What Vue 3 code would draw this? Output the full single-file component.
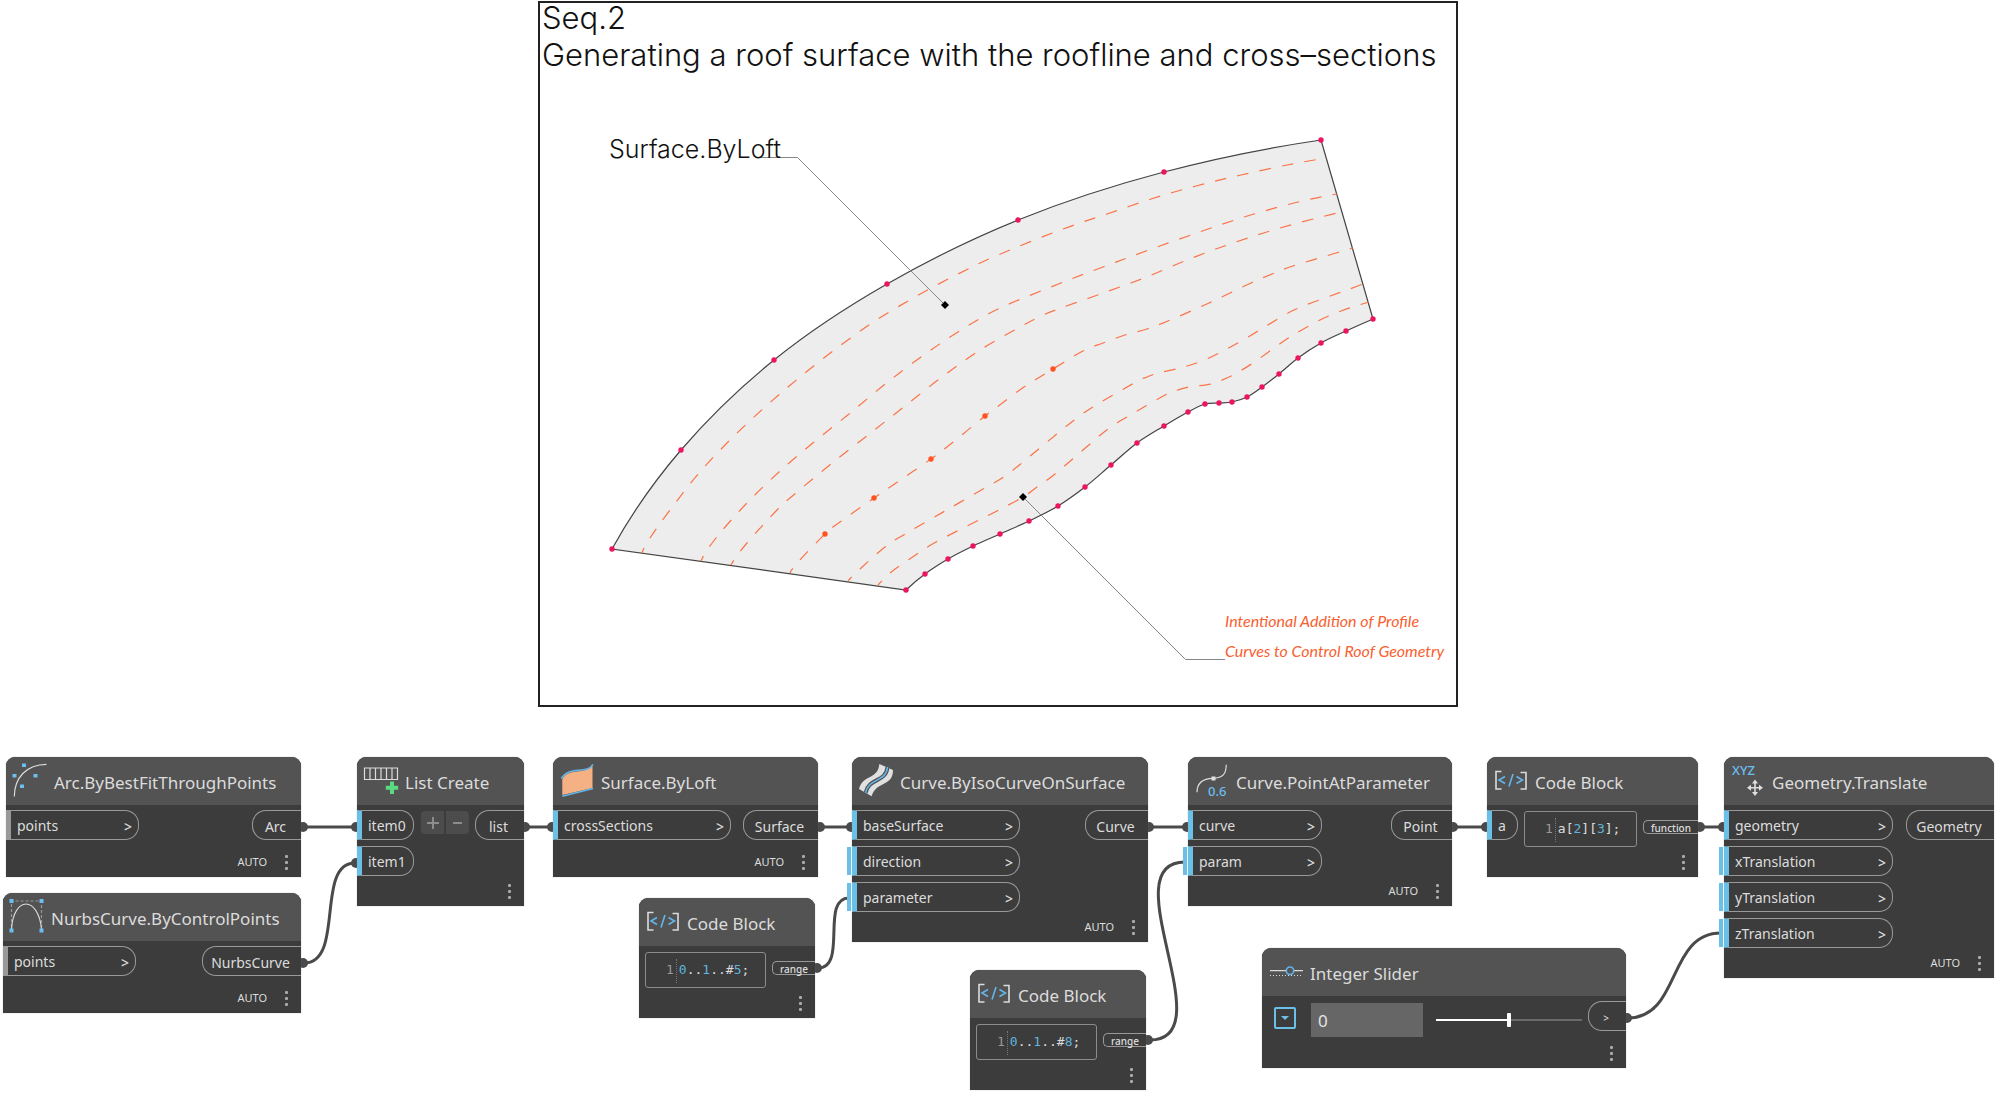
<script setup>
/**
 * RoofGraph
 * - Drawing sheet: lofted roof surface with its profile curves
 * - Node graph: the nodes that build the surface, placed on a free canvas
 */
import { ref } from 'vue'

// --- Drawing sheet ---
const roofline = [
  [612, 549], [681, 450], [774, 360], [887, 284], [1018, 220], [1164, 172], [1321, 140]
]
const eave = [
  [906, 590], [925, 574], [948, 559], [973, 546], [1000, 534], [1029, 521], [1058, 506],
  [1085, 487], [1111, 465], [1137, 443], [1164, 426], [1188, 412], [1205, 404], [1219, 403],
  [1232, 402], [1247, 397], [1262, 387], [1279, 374], [1298, 358], [1321, 343], [1346, 331], [1373, 319]
]
const profiles = [
  [[642, 553], [650, 538], [670, 510], [699, 473], [731, 439], [765, 407], [800, 377], [837, 348], [875, 321], [915, 297], [956, 275], [998, 255], [1063, 229], [1107, 214], [1151, 199], [1196, 186], [1241, 175], [1287, 165], [1327, 158]],
  [[701, 561], [716, 538], [746, 504], [779, 472], [814, 442], [849, 414], [884, 385], [921, 357], [958, 332], [998, 309], [1061, 283], [1103, 267], [1146, 251], [1211, 228], [1254, 214], [1298, 202], [1337, 194]],
  [[731, 565], [747, 543], [778, 509], [796, 493], [831, 464], [868, 435], [905, 406], [942, 377], [980, 350], [1020, 327], [1041, 316], [1061, 308], [1106, 292], [1149, 276], [1192, 258], [1236, 242], [1280, 228], [1325, 216], [1342, 212]],
  [[790, 573], [799, 561], [825, 534], [840, 522], [874, 498], [896, 483], [931, 459], [952, 443], [985, 416], [997, 407], [1024, 387], [1053, 369], [1083, 351], [1103, 343], [1125, 335], [1147, 329], [1168, 321], [1209, 303], [1251, 283], [1272, 274], [1293, 266], [1336, 253], [1353, 248]],
  [[848, 581], [860, 569], [885, 547], [905, 534], [945, 511], [985, 488], [1005, 476], [1023, 462], [1058, 433], [1077, 418], [1096, 405], [1136, 382], [1147, 377], [1158, 373], [1180, 368], [1202, 361], [1223, 351], [1243, 340], [1263, 328], [1294, 310], [1325, 298], [1347, 290], [1363, 284]],
  [[878, 585], [889, 574], [898, 567], [917, 554], [936, 542], [977, 521], [997, 511], [1023, 497], [1037, 487], [1055, 474], [1090, 444], [1108, 429], [1127, 417], [1167, 394], [1178, 390], [1189, 387], [1211, 384], [1222, 380], [1233, 375], [1253, 363], [1281, 343], [1300, 331], [1320, 320], [1341, 311], [1369, 302]]
]
const controlPoints = [[825, 534], [874, 498], [931, 459], [985, 416], [1053, 369]]

// neighbour beyond the end of a run, so that the end segments keep their bend
function beyond(a, b, c) {
  return [3 * a[0] - 3 * b[0] + c[0], 3 * a[1] - 3 * b[1] + c[1]]
}

// smooth segments through the points (Catmull-Rom as cubic beziers)
function segments(pts) {
  let d = ''
  for (let i = 0; i < pts.length - 1; i++) {
    const p1 = pts[i]
    const p2 = pts[i + 1]
    const p0 = pts[i - 1] || beyond(p1, p2, pts[i + 2])
    const p3 = pts[i + 2] || beyond(p2, p1, pts[i - 1])
    const c1 = [p1[0] + (p2[0] - p0[0]) / 6, p1[1] + (p2[1] - p0[1]) / 6]
    const c2 = [p2[0] - (p3[0] - p1[0]) / 6, p2[1] - (p3[1] - p1[1]) / 6]
    d += ` C${c1[0].toFixed(1)} ${c1[1].toFixed(1)} ${c2[0].toFixed(1)} ${c2[1].toFixed(1)} ${p2[0]} ${p2[1]}`
  }
  return d
}
function curve(pts) {
  return `M${pts[0].join(' ')}` + segments(pts)
}
const eaveBack = [...eave].reverse()
const surface = curve(roofline) + ` L${eaveBack[0].join(' ')}` + segments(eaveBack) + ' Z'

// --- Node graph ---
const nodes = [
  { id: 'arc', title: 'Arc.ByBestFitThroughPoints', x: 6, y: 17, w: 295, inW: 133, auto: true,
    inputs: [{ name: 'points', idle: true, arrow: true }], output: 'Arc', outW: 49 },
  { id: 'nurbs', title: 'NurbsCurve.ByControlPoints', x: 3, y: 153, w: 298, inW: 133, auto: true,
    inputs: [{ name: 'points', idle: true, arrow: true }], output: 'NurbsCurve', outW: 99 },
  { id: 'list', title: 'List Create', x: 357, y: 17, w: 167, inW: 57, counter: true,
    inputs: [{ name: 'item0' }, { name: 'item1' }], output: 'list', outW: 49 },
  { id: 'loft', title: 'Surface.ByLoft', x: 553, y: 17, w: 265, inW: 178, auto: true,
    inputs: [{ name: 'crossSections', arrow: true }], output: 'Surface', outW: 75 },
  { id: 'iso', title: 'Curve.ByIsoCurveOnSurface', x: 852, y: 17, w: 296, inW: 168, auto: true,
    inputs: [{ name: 'baseSurface', arrow: true }, { name: 'direction', arrow: true, preset: true }, { name: 'parameter', arrow: true, preset: true }],
    output: 'Curve', outW: 63 },
  { id: 'code1', icon: 'code', title: 'Code Block', x: 639, y: 158, w: 176, inputs: [], output: 'range', outW: 43,
    code: [['0', 1], ['..', 0], ['1', 1], ['..#', 0], ['5', 1], [';', 0]] },
  { id: 'code2', icon: 'code', title: 'Code Block', x: 970, y: 230, w: 176, inputs: [], output: 'range', outW: 43,
    code: [['0', 1], ['..', 0], ['1', 1], ['..#', 0], ['8', 1], [';', 0]] },
  { id: 'point', title: 'Curve.PointAtParameter', x: 1188, y: 17, w: 264, inW: 134, auto: true,
    inputs: [{ name: 'curve', arrow: true }, { name: 'param', arrow: true, preset: true }], output: 'Point', outW: 61 },
  { id: 'code3', icon: 'code', title: 'Code Block', x: 1487, y: 17, w: 211, inW: 31,
    inputs: [{ name: 'a' }], output: 'function', outW: 55,
    code: [['a[', 0], ['2', 1], ['][', 0], ['3', 1], ['];', 0]] },
  { id: 'slider', title: 'Integer Slider', x: 1262, y: 208, w: 364, inputs: [], output: '>', outW: 38, slider: true },
  { id: 'translate', title: 'Geometry.Translate', x: 1724, y: 17, w: 270, inW: 169, auto: true,
    inputs: [{ name: 'geometry', arrow: true }, { name: 'xTranslation', arrow: true, preset: true }, { name: 'yTranslation', arrow: true, preset: true }, { name: 'zTranslation', arrow: true, preset: true }],
    output: 'Geometry', outW: 88 }
]

const wires = [
  'M304 87 H355',
  'M304 223 C345 223 315 123 355 123',
  'M526 87 H551',
  'M820 87 H850',
  'M818 228 C848 228 820 158 849 158',
  'M1150 87 H1187',
  'M1150 300 C1225 300 1110 122 1185 122',
  'M1454 87 H1486',
  'M1700 87 H1723',
  'M1628 278 C1681 278 1667 193 1721 193'
]
const plugs = [
  [303, 87], [356, 87], [303, 223], [356, 123], [525, 87], [552, 87], [820, 87], [851, 87], [817, 228],
  [1149, 87], [1187, 87], [1148, 300], [1453, 87], [1486, 87], [1700, 87], [1723, 87], [1627, 278]
]

const amount = ref('0')
const sliderPos = ref(50)
</script>

<template>
  <main class="page">
    <figure class="sheet">
      <svg class="drawing" viewBox="538 0 920 707" role="img" aria-label="Roof surface lofted from cross-sections">
        <rect x="539" y="2" width="918" height="704" class="frame" />
        <path :d="surface" class="surface" />
        <path v-for="(p, i) in profiles" :key="i" :d="curve(p)" class="profile" />
        <path d="M761 157.500 H797.500 L945 305" class="leader" />
        <path d="M1023 497 L1185.500 659.500 H1225" class="leader" />
        <path d="M945 301 l4 4 -4 4 -4 -4z M1023 493 l4 4 -4 4 -4 -4z" />
        <circle v-for="(p, i) in [...roofline, ...eave]" :key="'r' + i" :cx="p[0]" :cy="p[1]" r="2.700" class="edge-point" />
        <circle v-for="(p, i) in controlPoints" :key="'c' + i" :cx="p[0]" :cy="p[1]" r="2.700" class="control-point" />
        <text x="542" y="29" class="heading">Seq.2</text>
        <text x="542" y="66" class="heading">Generating a roof surface with the roofline and cross–sections</text>
        <text x="609" y="158" class="label">Surface.ByLoft</text>
        <text x="1225" y="627" class="note">Intentional Addition of Profile</text>
        <text x="1225" y="657" class="note">Curves to Control Roof Geometry</text>
      </svg>
    </figure>

    <section class="graph">
      <svg class="wires" aria-hidden="true">
        <path v-for="d in wires" :key="d" :d="d" />
        <circle v-for="(p, i) in plugs" :key="i" :cx="p[0]" :cy="p[1]" r="5" />
      </svg>

      <article v-for="n in nodes" :key="n.id" class="node" :style="{ left: n.x + 'px', top: n.y + 'px', width: n.w + 'px' }">
        <header class="head">
          <svg class="icon" viewBox="0 0 36 36" aria-hidden="true">
            <g v-if="n.id === 'arc'">
              <path d="M1.300 33.500 C1.500 15 13 1.500 33.500 1.300" class="line" />
              <path d="M9 .5h4v3.500h-4z M-.5 11h4v3.500h-4z M20.500 11h4v3.500h-4z M7 21.500h4v3.500h-4z" class="blue" />
            </g>
            <g v-else-if="n.id === 'nurbs'">
              <path d="M1.500 28V2H31.500V28" class="line dashed" />
              <path d="M1.500 30C2.500 14 9 5 16 5S30 14 31.500 30" class="line" />
              <path d="M-.5 0h4v4h-4z M29.500 0h4v4h-4z M-.5 29.500h4v4h-4z M29.500 29.500h4v4h-4z" class="blue" />
            </g>
            <g v-else-if="n.id === 'list'">
              <path d="M.5 5H33.500V16.500H.5Z M6 5V16.500 M11.500 5V16.500 M17 5V16.500 M22.500 5V16.500 M28 5V16.500" class="line" />
              <path d="M26 18.500h4v4.200h4.200v4h-4.200v4.200h-4v-4.200h-4.200v-4h4.200z" class="green" />
            </g>
            <g v-else-if="n.id === 'loft'">
              <path d="M2.300 16C10 4 24 12 32.500 3V25L2.300 32Z" class="peach" />
              <path d="M1.300 15.500C9 2 27 12 33 1.300 M2.300 33.300L33 25.500" class="line blue-line" />
            </g>
            <g v-else-if="n.id === 'iso'">
              <path d="M20.300 1L34 7C34 24 17 18 12.700 33.300L0 26C4 11 19 17 20.300 1Z" class="light" />
              <path d="M28.500 4C27 20 10 14 6.500 30" class="line core-edge" />
              <path d="M28.500 4C27 20 10 14 6.500 30" class="line blue-line" />
            </g>
            <g v-else-if="n.id === 'point'">
              <path d="M2 29.300C2 19 8 15.500 18 15.300S31 11 31.300 1.700" class="line" />
              <rect x="16.500" y="13.500" width="4" height="4" class="light" />
              <text x="13" y="33" class="tag">0.6</text>
            </g>
            <g v-else-if="n.icon === 'code'">
              <path d="M7.500 8.500H2V26H7.500 M26.500 9.500H32V26H26.500" class="line bracket" />
              <path d="M11 13.500L5 17L11 20.500 M19 11L15 23.500 M22.500 13.500L28.500 17L22.500 20.500" class="line blue-line" />
            </g>
            <g v-else-if="n.id === 'slider'">
              <path d="M1 16.700H17 M25 16.700H34" class="line" />
              <path d="M1 21.500H32" class="line dotted" />
              <circle cx="21" cy="16.700" r="3.700" class="line blue-line" />
            </g>
            <g v-else>
              <text x="1" y="12" class="tag">XYZ</text>
              <path d="M24 19V30.500 M18 24.700H30" class="line bracket" />
              <path d="M24 16.500l3 4h-6z M24 33l3-4h-6z M16 24.700l4-3v6z M32 24.700l-4-3v6z" class="light" />
            </g>
          </svg>
          <h3>{{ n.title }}</h3>
        </header>

        <div class="body">
          <ul v-if="n.inputs.length" class="inputs">
            <li v-for="p in n.inputs" :key="p.name" class="port in" :class="{ idle: p.idle, preset: p.preset }" :style="{ width: n.inW + 'px' }">
              <span>{{ p.name }}</span>
              <button v-if="p.arrow" type="button" class="arrow" :aria-label="p.name + ' options'">&gt;</button>
            </li>
          </ul>
          <div v-if="n.counter" class="counter">
            <button type="button" aria-label="Add item"><svg viewBox="0 0 12 12"><path d="M6 0V12 M0 6H12" /></svg></button>
            <button type="button" aria-label="Remove item"><svg viewBox="0 0 12 12"><path d="M1 6H10" /></svg></button>
          </div>
          <div v-if="n.code" class="editor">
            <span class="line-no">1</span>
            <code><span v-for="(t, i) in n.code" :key="i" :class="{ num: t[1] }">{{ t[0] }}</span></code>
          </div>
          <template v-if="n.slider">
            <button type="button" class="expand" aria-label="Slider settings"><svg viewBox="0 0 8 4"><path d="M0 0H8L4 4Z" /></svg></button>
            <input v-model="amount" type="text" class="amount" aria-label="Value" />
            <input v-model="sliderPos" type="range" min="0" max="100" class="range" aria-label="Slider" />
          </template>
          <span class="port out" :class="{ small: n.code, mark: n.slider }" :style="{ width: n.outW + 'px' }">{{ n.output }}</span>
        </div>

        <footer class="foot">
          <span v-if="n.auto">AUTO</span>
          <button type="button" class="menu" aria-label="Node menu"><i></i><i></i><i></i></button>
        </footer>
      </article>
    </section>
  </main>
</template>

<style>
body { margin: 0; background: #fff; }
</style>

<style scoped>
.page { font-family: "Noto Sans", "Open Sans", sans-serif; color: #dcdcdc; overflow: hidden; }

.sheet { width: 920px; max-width: 100%; margin: 0 auto 33px; }
.drawing { display: block; width: 100%; }
.frame { fill: #fff; stroke: #222; stroke-width: 2; }
.surface { fill: #ededed; stroke: #444; stroke-width: 1.200; }
.profile { fill: none; stroke: #fb7347; stroke-width: 1.200; stroke-dasharray: 11.500 11.300; stroke-dashoffset: 6; }
.leader { fill: none; stroke: #888; stroke-width: 1; }
.edge-point { fill: #ec1561; }
.control-point { fill: #ff5320; }
.heading { font: 300 31px Inter, Roboto, sans-serif; fill: #111; }
.label { font: 300 25px Inter, Roboto, sans-serif; fill: #111; }
.note { font: italic 400 16px Lato, sans-serif; fill: #f9602f; }

.graph { position: relative; height: 353px; }
.wires { position: absolute; left: 0; top: 0; width: 100%; height: 100%; overflow: visible; }
.wires path { fill: none; stroke: #4a4a4a; stroke-width: 3; }
.wires circle { fill: #4a4a4a; }

.node { position: absolute; display: flex; flex-direction: column; min-height: 120px; background: #3c3c3c; border-radius: 9px 9px 0 0; box-shadow: 0 0 1px #777; }
.head { display: flex; align-items: center; gap: 5px; height: 48px; padding-left: 7px; background: #535353; border-radius: 9px 9px 0 0; }
.head h3 { margin: 0; padding-top: 3px; font-size: 17px; line-height: 24px; font-weight: 400; white-space: nowrap; }
.icon { flex: none; width: 36px; height: 36px; overflow: visible; }
.line { fill: none; stroke: #dcdcdc; stroke-width: 1.200; }
.dashed { stroke: #999; stroke-dasharray: 3 2; }
.dotted { stroke-dasharray: 1 2; }
.bracket { stroke-width: 1.600; }
.blue { fill: #6cbdf0; }
.blue-line { stroke: #64b5ea; stroke-width: 1.600; }
.core-edge { stroke: #535353; stroke-width: 4; }
.green { fill: #5bd882; }
.peach { fill: #f5b183; }
.light { fill: #e0e0e0; }
.tag { font: 500 13px "Noto Sans", sans-serif; fill: #6cbdf0; }

.body { display: flex; align-items: flex-start; padding-top: 5px; }
.inputs { display: flex; flex-direction: column; gap: 6px; margin: 0; padding: 0; list-style: none; }
.port { box-sizing: border-box; display: flex; align-items: center; height: 30px; padding-top: 2px; border: 1px solid #999; font-size: 14px; line-height: 20px; }
.in { position: relative; justify-content: space-between; padding-right: 6px; padding-left: 6px; border-left: 5px solid #6ac0e7; border-radius: 0 14px 14px 0; }
.in.idle { border-left-color: #999; }
.in.preset::before { content: ""; position: absolute; left: -10px; top: 0; width: 4px; height: 28px; background: #6ac0e7; }
.out { justify-content: center; margin-left: auto; padding-top: 4px; padding-right: 3px; border-right: none; border-radius: 14px 0 0 14px; }
.out.small { height: 14px; margin-top: 10px; padding-top: 1px; padding-right: 0; border-radius: 5px 0 0 5px; font-size: 10px; line-height: 12px; font-weight: 500; }
.out.mark { font-size: 10px; font-weight: 500; }

button { padding: 0; border: none; background: none; color: inherit; font: inherit; cursor: pointer; }
.arrow { padding-top: 2px; font-weight: 500; }

.counter { display: flex; gap: 2px; margin: 1px 0 0 7px; }
.counter button { display: grid; place-items: center; width: 23px; height: 23px; background: #4c4c4c; border-radius: 4px 0 0 4px; }
.counter button + button { border-radius: 0 4px 4px 0; }
.counter svg { width: 12px; height: 12px; }
.counter path { stroke: #8c8c8c; stroke-width: 2; }

.editor { box-sizing: border-box; flex: 1; display: flex; height: 36px; margin: 1px 6px 0; padding: 6px 0 0 20px; border: 1px solid #8c8c8c; border-radius: 3px; font: 13px/22px "DejaVu Sans Mono", monospace; }
.editor code { font: inherit; white-space: nowrap; }
.line-no { height: 24px; margin-right: 2px; padding-right: 2px; border-right: 1px dotted #777; color: #999; }
.num { color: #5fb5df; }

.expand { display: grid; place-items: center; box-sizing: border-box; width: 22px; height: 22px; margin: 6px 15px 0 12px; border: 2px solid #6ac0e7; border-radius: 2px; }
.expand svg { width: 8px; height: 4px; }
.expand path { fill: #6ac0e7; }
.amount { box-sizing: border-box; width: 112px; height: 34px; margin-top: 2px; padding: 0 7px; border: none; background: #666; color: #e4e4e4; font: 17px "Noto Sans", sans-serif; }
.range { appearance: none; width: 146px; height: 14px; margin: 12px 0 0 13px; background: linear-gradient(90deg, #fff 50%, #6a6a6a 50%) center / 100% 2px no-repeat; }
.range::-webkit-slider-thumb { appearance: none; width: 4px; height: 14px; border-radius: 1px; background: #fff; }

.foot { display: flex; align-items: center; justify-content: flex-end; gap: 18px; height: 30px; margin-top: auto; padding-right: 13px; font-size: 11px; line-height: 16px; }
.menu { display: flex; flex-direction: column; gap: 3px; }
.menu i { width: 3px; height: 3px; border-radius: 1px; background: #aaa; }
</style>
